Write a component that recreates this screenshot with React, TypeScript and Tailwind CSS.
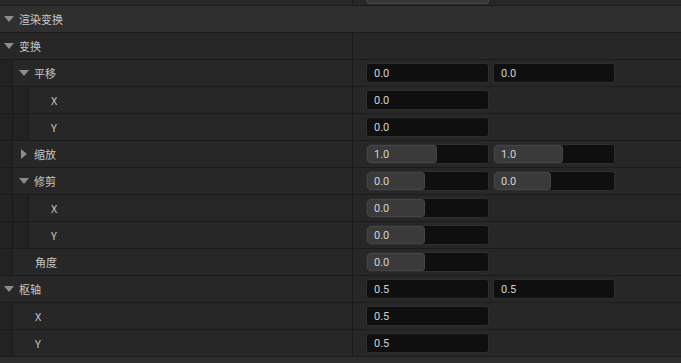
import React from 'react';

type Row = {
  label: string;
  depth: number;
  arrow?: 'down' | 'right';
  values?: string[];
  fills?: string[];
};

const rows: Row[] = [
  { label: '变换', depth: 0, arrow: 'down' },
  { label: '平移', depth: 1, arrow: 'down', values: ['0.0', '0.0'] },
  { label: 'X', depth: 2, values: ['0.0'] },
  { label: 'Y', depth: 2, values: ['0.0'] },
  { label: '缩放', depth: 1, arrow: 'right', values: ['1.0', '1.0'], fills: ['w-[70px]', 'w-[69px]'] },
  { label: '修剪', depth: 1, arrow: 'down', values: ['0.0', '0.0'], fills: ['w-[58px]', 'w-[57px]'] },
  { label: 'X', depth: 2, values: ['0.0'], fills: ['w-[58px]'] },
  { label: 'Y', depth: 2, values: ['0.0'], fills: ['w-[58px]'] },
  { label: '角度', depth: 1, values: ['0.0'], fills: ['w-[58px]'] },
  { label: '枢轴', depth: 0, arrow: 'down', values: ['0.5', '0.5'] },
  { label: 'X', depth: 1, values: ['0.5'] },
  { label: 'Y', depth: 1, values: ['0.5'] },
];

const font = { fontFamily: '"Noto Sans CJK SC", Roboto, sans-serif' };

const Arrow: React.FC<{ dir: 'down' | 'right' }> = ({ dir }) =>
  dir === 'down' ? (
    <svg width="10" height="6" viewBox="0 0 10 6" className="shrink-0">
      <path d="M0 0 L10 0 L5 6 Z" fill="#8c8c8c" />
    </svg>
  ) : (
    <svg width="6" height="10" viewBox="0 0 6 10" className="shrink-0">
      <path d="M0 0 L6 5 L0 10 Z" fill="#8c8c8c" />
    </svg>
  );

const NumBox: React.FC<{ value: string; wide: string; fill?: string }> = ({ value, wide, fill }) => (
  <div
    className={`relative h-[20px] ${wide} rounded-[3px] border border-[#2e2e2e] bg-[#0f0f0f] flex items-center`}
  >
    {fill && (
      <div className={`absolute left-0 top-0 bottom-0 ${fill} rounded-[3px] bg-[#3a3a3a] border border-[#444]`} />
    )}
    <span
      className="relative pl-[7px] text-[11px] text-[#d2d2d2] leading-none"
      style={{ fontFamily: 'Roboto, "Noto Sans", sans-serif' }}
    >
      {value}
    </span>
  </div>
);

const PropRow: React.FC<{ row: Row }> = ({ row }) => {
  const strips = Array.from({ length: row.depth });
  const textPad = row.depth === 0 ? 'pl-[3px]' : 'pl-[5px]';
  return (
    <div className="flex h-[27px] border-b border-[#1b1b1b] bg-[#272727]">
      <div className="flex w-[352px] shrink-0">
        {strips.map((_, i) => (
          <div
            key={i}
            className={`${i === 0 ? 'w-[13px]' : 'w-[16px]'} shrink-0 bg-[#222222] border-r border-[#1a1a1a]`}
          />
        ))}
        <div className={`flex items-center ${textPad}`}>
          <div className="w-[11px] flex justify-center shrink-0">{row.arrow && <Arrow dir={row.arrow} />}</div>
          <span className={`${row.arrow || row.depth === 0 ? 'ml-[5px]' : 'ml-[6px]'} text-[11px] text-[#c6c6c6]`} style={font}>
            {row.label}
          </span>
        </div>
      </div>
      <div className="w-px bg-[#1b1b1b] shrink-0" />
      <div className="flex items-center gap-[4px] pl-[13px]">
        {row.values?.map((v, i) => (
          <NumBox key={i} value={v} wide={i === 0 ? 'w-[123px]' : 'w-[122px]'} fill={row.fills?.[i]} />
        ))}
      </div>
    </div>
  );
};

export default function App() {
  return (
    <div className="w-[681px] h-[363px] overflow-hidden bg-[#2d2d2d]" style={font}>
      {/* tail of the previous row */}
      <div className="flex h-[6px] border-b border-[#1b1b1b] bg-[#272727] overflow-hidden">
        <div className="w-[352px] shrink-0" />
        <div className="w-px bg-[#1b1b1b] shrink-0" />
        <div className="flex items-end pl-[13px] pb-[1px]">
          <div className="h-[20px] w-[123px] rounded-[3px] border border-[#454545] bg-[#383838]" />
        </div>
      </div>

      {/* category header */}
      <div className="flex h-[27px] items-center border-b border-[#1b1b1b] bg-[#2f2f2f] pl-[3px]">
        <div className="w-[11px] flex justify-center">
          <Arrow dir="down" />
        </div>
        <span className="ml-[5px] text-[11px] text-[#c6c6c6]">渲染变换</span>
      </div>

      {rows.map((r, i) => (
        <PropRow key={i} row={r} />
      ))}
    </div>
  );
}
